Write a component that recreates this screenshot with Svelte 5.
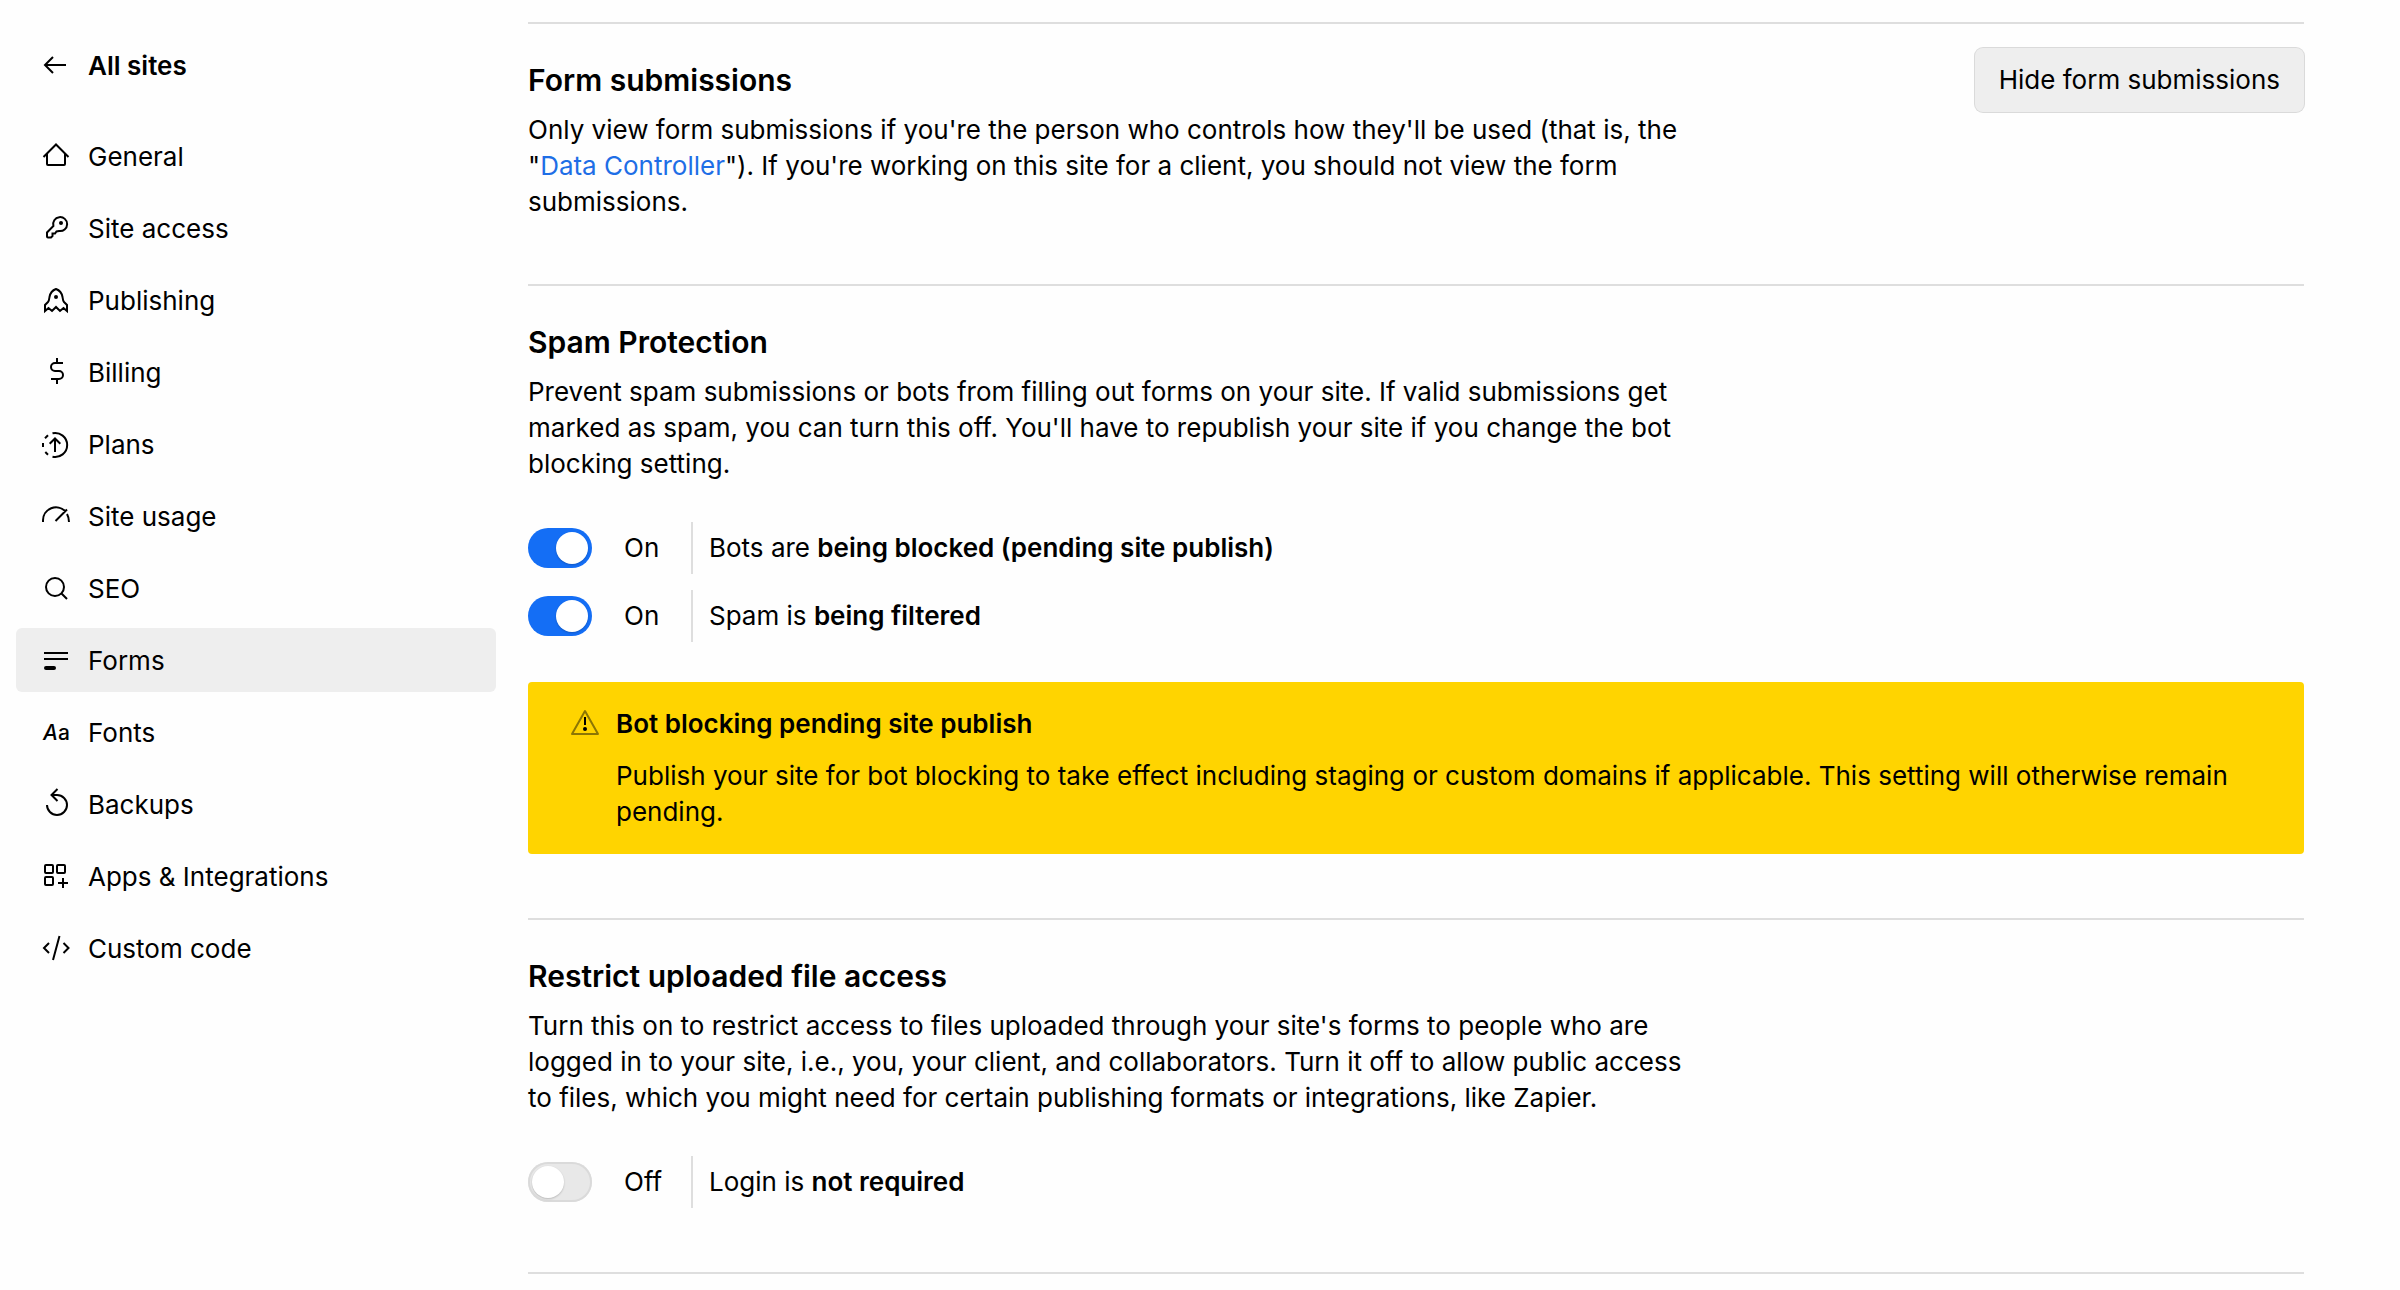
<script>
    let current = $state('Forms')
    let showSubmissions = $state(true)
    let blockBots = $state(true)
    let filterSpam = $state(true)
    let requireLogin = $state(false)

    const links = ['General', 'Site access', 'Publishing', 'Billing', 'Plans', 'Site usage', 'SEO', 'Forms', 'Fonts', 'Backups', 'Apps & Integrations', 'Custom code']

    const icons = {
        'General': 'M3.5 17 16 4.5 28.5 17M7 13.5V24q0 1 1 1h16q1 0 1-1V13.5',
        'Site access': 'M13.4 14A7 7 0 1 1 19 19L16.5 19.5 15 21.5H12.5V24L11 25.5H8Q7 25.5 7 24.5V20.5Z',
        'Publishing': 'M16 5Q10.500 7 9.500 13 9 17 8 18L5 21V27L8.500 24 12 27 16 23 20 27 23.500 24 27 27V21L24 18Q23 17 22.500 13 21.500 7 16 5Z',
        'Billing': 'M17 2V7M23 7H15A4 4 0 0 0 15 15H19A4 4 0 0 1 19 23H11M17 23V28',
        'Plans': 'M12.500 5.300A12 12 0 1 1 12.500 28.700M8 7.300 5 10.300M3 15V19M5.300 24 8 26.700M15 24V10M9.700 15.800 15 10.500 20.300 15.800',
        'Site usage': 'M3 22V20.500A13 13 0 0 1 25.500 11.500M27 14Q29 17.500 29 22M15.500 21 27 9.500',
        'SEO': 'M21 21 27 27M24 15A9 9 0 1 1 6 15 9 9 0 1 1 24 15Z',
        'Forms': 'M4 9H28M4 15H28',
        'Fonts': '',
        'Backups': 'M7 17A10 10 0 1 0 17 7H11.500M17.500 1 11.500 7 17.500 13',
        'Apps & Integrations': 'M6 5H12Q13 5 13 6V12Q13 13 12 13H6Q5 13 5 12V6Q5 5 6 5ZM18 5H24Q25 5 25 6V12Q25 13 24 13H18Q17 13 17 12V6Q17 5 18 5ZM6 17H12Q13 17 13 18V24Q13 25 12 25H6Q5 25 5 24V18Q5 17 6 17ZM23 18V28M18 23H28',
        'Custom code': 'M9 11 4 16 9 21M23.500 11 28.500 16 23.500 21M19.500 4 13 28'
    }
</script>

<div class="page">
    <nav class="sidebar">
        <a class="link back" href="#sites">
            <svg class="icon" viewBox="0 0 32 32"><path d="M26 15H5M13 7 5 15 13 23" /></svg>
            All sites
        </a>
        {#each links as name}
            <a class="link" class:active={current === name} href="#{name}" onclick={() => current = name}>
                <svg class="icon" viewBox="0 0 32 32">
                    <path d={icons[name]} />
                    {#if name === 'Site access'}
                        <circle class="solid" cx="21" cy="11" r="2" />
                    {:else if name === 'Publishing'}
                        <circle class="solid" cx="16" cy="13" r="2" />
                    {:else if name === 'Forms'}
                        <rect class="solid" x="4" y="22" width="12" height="4" rx="2" />
                    {:else if name === 'Fonts'}
                        <text class="letters" x="3" y="24"><tspan class="slanted">A</tspan>a</text>
                    {/if}
                </svg>
                <span class="name">{name}</span>
            </a>
        {/each}
    </nav>

    <main>
        <section>
            <header>
                <h2>Form submissions</h2>
                <button onclick={() => showSubmissions = !showSubmissions}>
                    {showSubmissions ? 'Hide' : 'View'} form submissions
                </button>
            </header>
            <p class="description">
                Only view form submissions if you're the person who controls how they'll be used (that is, the
                "<a href="#controller">Data Controller</a>"). If you're working on this site for a client, you should not view the form submissions.
            </p>
        </section>

        <section>
            <header>
                <h2>Spam Protection</h2>
            </header>
            <p class="description">
                Prevent spam submissions or bots from filling out forms on your site. If valid submissions get
                marked as spam, you can turn this off. You'll have to republish your site if you change the bot
                blocking setting.
            </p>
            <div class="toggles">
                <label class="toggle">
                    <input type="checkbox" role="switch" bind:checked={blockBots} />
                    <span class="status">{blockBots ? 'On' : 'Off'}</span>
                    <span class="state">Bots are <b>{blockBots ? 'being blocked (pending site publish)' : 'not being blocked'}</b></span>
                </label>
                <label class="toggle">
                    <input type="checkbox" role="switch" bind:checked={filterSpam} />
                    <span class="status">{filterSpam ? 'On' : 'Off'}</span>
                    <span class="state">Spam is <b>{filterSpam ? 'being filtered' : 'not being filtered'}</b></span>
                </label>
            </div>
            {#if blockBots}
                <div class="notice">
                    <svg class="icon" viewBox="0 0 32 32">
                        <path class="triangle" d="M17 5 30 28H4Z" />
                        <path d="M17 11V19" />
                        <circle class="solid" cx="17" cy="23" r="2" />
                    </svg>
                    <div class="noticeText">
                        <h3>Bot blocking pending site publish</h3>
                        <p>Publish your site for bot blocking to take effect including staging or custom domains if applicable. This setting will otherwise remain pending.</p>
                    </div>
                </div>
            {/if}
        </section>

        <section>
            <header>
                <h2>Restrict uploaded file access</h2>
            </header>
            <p class="description">
                Turn this on to restrict access to files uploaded through your site's forms to people who are
                logged in to your site, i.e., you, your client, and collaborators. Turn it off to allow public access
                to files, which you might need for certain publishing formats or integrations, like Zapier.
            </p>
            <div class="toggles">
                <label class="toggle">
                    <input type="checkbox" role="switch" bind:checked={requireLogin} />
                    <span class="status">{requireLogin ? 'On' : 'Off'}</span>
                    <span class="state">Login is <b>{requireLogin ? 'required' : 'not required'}</b></span>
                </label>
            </div>
        </section>
    </main>
</div>

<style>
    :global(body) {
        background-color: #fefefe;
    }

    .page {
        display: flex;
        align-items: flex-start;
        color: #000;
        font-family: Inter, sans-serif;
        font-size: 26px;
        line-height: 36px;
    }

    .sidebar {
        display: flex;
        flex-direction: column;
        gap: 8px;
        flex: none;
        width: 480px;
        padding: 34px 16px;
    }

    .link {
        display: flex;
        align-items: center;
        gap: 16px;
        height: 64px;
        padding: 0 24px;
        border-radius: 6px;
        color: inherit;
        text-decoration: none;
    }

    .back {
        margin-bottom: 18px;
        font-weight: 600;
    }

    .active {
        background-color: #eeeeee;
    }

    .name {
        padding-top: 2px;
    }

    .icon {
        flex: none;
        width: 32px;
        height: 32px;
        fill: none;
        stroke: #000;
        stroke-width: 2;
    }

    .solid {
        fill: #000;
        stroke: none;
    }

    .letters {
        fill: #000;
        stroke: none;
        font-size: 21px;
        font-weight: 500;
    }

    .slanted {
        font-style: italic;
    }

    main {
        flex: 1;
        min-width: 0;
        padding: 22px 96px 16px 16px;
    }

    section {
        padding: 24px 0 64px;
        border-top: 2px solid #dedede;
    }

    section:last-child {
        border-bottom: 2px solid #dedede;
    }

    header {
        display: flex;
        align-items: center;
        justify-content: space-between;
        height: 64px;
    }

    h2, h3, p {
        margin: 0;
    }

    h2 {
        font-size: 30px;
        font-weight: 600;
    }

    h3 {
        font-size: 26px;
        font-weight: 600;
    }

    b {
        font-weight: 600;
    }

    button {
        height: 64px;
        padding: 0 24px;
        border: none;
        border-radius: 8px;
        background-color: #eeeeee;
        box-shadow: 0 0 0 1px #dadada;
        color: inherit;
        font: inherit;
        cursor: pointer;
    }

    .description {
        max-width: 1160px;
    }

    .description a {
        color: #1e6ee6;
        text-decoration: none;
    }

    .toggles {
        display: flex;
        flex-direction: column;
        gap: 16px;
        margin-top: 40px;
    }

    .toggle {
        display: flex;
        align-items: center;
    }

    .toggle input {
        appearance: none;
        display: flex;
        width: 64px;
        height: 40px;
        margin: 0 32px 0 0;
        padding: 4px;
        border-radius: 20px;
        background-color: #e8e8e8;
        box-shadow: inset 0 0 0 2px #dadada;
        cursor: pointer;
    }

    .toggle input::before {
        content: '';
        width: 32px;
        height: 32px;
        border-radius: 50%;
        background-color: #fff;
        box-shadow: 0 1px 2px rgba(0, 0, 0, 0.2);
    }

    .toggle input:checked {
        justify-content: flex-end;
        background-color: #146ef5;
        box-shadow: none;
    }

    .status {
        width: 67px;
    }

    .state {
        padding: 8px 0 8px 16px;
        border-left: 2px solid #dedede;
    }

    .notice {
        display: flex;
        gap: 16px;
        margin-top: 40px;
        padding: 24px 24px 24px 40px;
        border-radius: 4px;
        background-color: #ffd400;
    }

    .triangle {
        stroke: #8c7604;
        stroke-linejoin: round;
    }

    .noticeText {
        display: flex;
        flex-direction: column;
        gap: 16px;
    }
</style>
